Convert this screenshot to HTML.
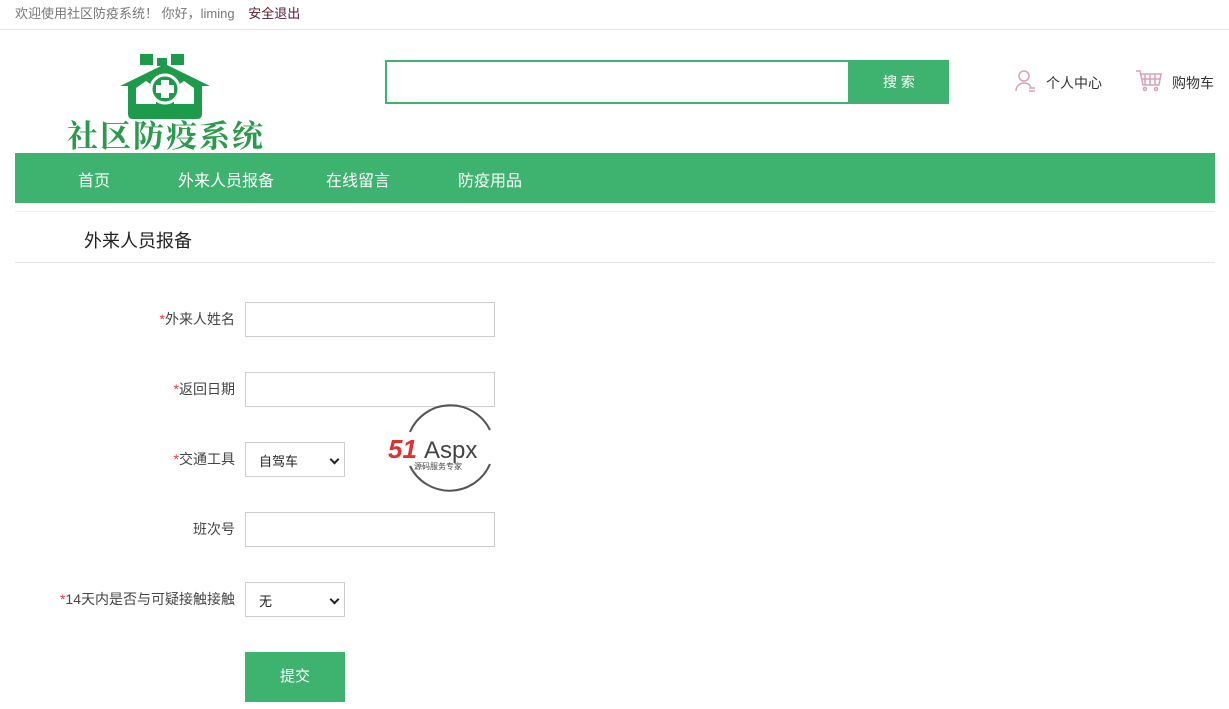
<!DOCTYPE html>
<html><head><meta charset="utf-8"><style>
*{margin:0;padding:0;box-sizing:border-box}
body{width:1229px;height:709px;overflow:hidden;background:#fff;font-family:"Liberation Sans","Noto Sans CJK SC",sans-serif;font-size:14px;color:#333;position:relative}
.a{position:absolute}
.top{left:0;top:0;width:1229px;height:30px;border-bottom:1px solid #e5e5e5;font-size:13px;color:#777;padding:3px 0 0 15px}
.top span{color:#5a1a2a;margin-left:10px}
.nav{left:15px;top:153px;width:1200px;height:50px;background:#3db36f}
.nav div{position:absolute;top:14px;color:#fff;font-size:16px}
.lab{width:235px;text-align:right;font-size:14px;color:#444;line-height:16px}
.lab b{color:#e33;font-weight:normal}
.inp{width:250px;height:35px;border:1px solid #ccc;background:#fff}
.sel{width:100px;height:35px;border:1px solid #ccc;font-size:13px;padding:8px 0 0 13px;color:#222}
.sel:after{content:"";position:absolute;right:6px;top:13px;width:5px;height:5px;border-right:2px solid #222;border-bottom:2px solid #222;transform:rotate(45deg)}
</style></head><body>
<div class="a top">欢迎使用社区防疫系统！ 你好，liming <span>安全退出</span></div>
<svg class="a" style="left:118px;top:54px" width="94" height="66" viewBox="0 0 94 66">
<g fill="#1e9a4b"><rect x="22" y="0" width="13" height="11"/><rect x="39" y="4" width="10" height="8"/><rect x="53" y="0" width="13" height="11"/>
<path d="M2 32 L47 10 L92 32 L84 32 L84 60 Q84 65 79 65 L15 65 Q10 65 10 60 L10 32 Z"/></g>
<path d="M18 34 L28 27 L38 34 L38 50 L18 50Z M56 34 L66 27 L76 34 L76 50 L56 50Z" fill="#fff"/>
<circle cx="47" cy="35" r="14" fill="#1e9a4b" stroke="#fff" stroke-width="3"/>
<path d="M43 26h8v5h5v8h-5v5h-8v-5h-5v-8h5z" fill="#fff"/></svg>
<div class="a" style="left:67px;top:114px;font-family:'Noto Serif CJK SC',serif;font-size:31px;line-height:40px;color:#2a9a4c;font-weight:bold;letter-spacing:2px">社区防疫系统</div>
<div class="a" style="left:385px;top:60px;width:465px;height:44px;border:2px solid #3db36f"></div>
<div class="a" style="left:849px;top:60px;width:100px;height:44px;background:#3db36f;color:#fff;font-size:14px;text-align:center;line-height:44px">搜 索</div>
<svg class="a" style="left:1015px;top:69px" width="22" height="24" viewBox="0 0 22 24" fill="none" stroke="#d9a0b8" stroke-width="1.5"><circle cx="9" cy="7" r="5"/><path d="M1 22c0-5 4-8 8-8s6 2 7 4"/><path d="M14 19h6M14 22h6"/></svg>
<div class="a" style="left:1046px;top:73px;font-size:14px;color:#333">个人中心</div>
<svg class="a" style="left:1135px;top:69px" width="28" height="24" viewBox="0 0 28 24" fill="none" stroke="#d9a0b8" stroke-width="1.5"><path d="M1 2h4l3 14h16l2-11H6"/><path d="M10 5v11M15 5v11M20 5v11M7 10h18"/><circle cx="10" cy="20" r="1.5"/><circle cx="21" cy="20" r="1.5"/></svg>
<div class="a" style="left:1172px;top:73px;font-size:14px;color:#333">购物车</div>
<div class="a nav"><div style="left:63px">首页</div><div style="left:163px">外来人员报备</div><div style="left:311px">在线留言</div><div style="left:443px">防疫用品</div></div>
<div class="a" style="left:15px;top:211px;width:1200px;border-top:1px solid #eee"></div>
<div class="a" style="left:84px;top:227px;font-size:18px;color:#222">外来人员报备</div>
<div class="a" style="left:15px;top:262px;width:1200px;border-top:1px solid #e5e5e5"></div>
<div class="a lab" style="left:0;top:311px"><b>*</b>外来人姓名</div><div class="a inp" style="left:245px;top:302px"></div>
<div class="a lab" style="left:0;top:381px"><b>*</b>返回日期</div><div class="a inp" style="left:245px;top:372px"></div>
<div class="a lab" style="left:0;top:451px"><b>*</b>交通工具</div><div class="a sel" style="left:245px;top:442px">自驾车</div>
<div class="a lab" style="left:0;top:521px">班次号</div><div class="a inp" style="left:245px;top:512px"></div>
<div class="a lab" style="left:0;top:591px"><b>*</b>14天内是否与可疑接触接触</div><div class="a sel" style="left:245px;top:582px">无</div>
<div class="a" style="left:245px;top:652px;width:100px;height:50px;background:#3db36f;color:#fff;font-size:15px;text-align:center;line-height:50px">提交</div>
<svg class="a" style="left:386px;top:402px" width="126" height="92" viewBox="0 0 126 92"><path d="M24 30 A44 44 0 0 1 104 28 M104 62 A44 44 0 0 1 24 64" fill="none" stroke="#555" stroke-width="2"/>
<text x="2" y="56" font-family="Liberation Sans" font-weight="bold" font-style="italic" font-size="26" fill="#e03030">51</text>
<text x="38" y="56" font-family="Liberation Sans" font-size="24" fill="#444">Aspx</text>
<text x="28" y="67" font-family="Noto Sans CJK SC" font-size="8" fill="#444">源码服务专家</text></svg>
</body></html>
